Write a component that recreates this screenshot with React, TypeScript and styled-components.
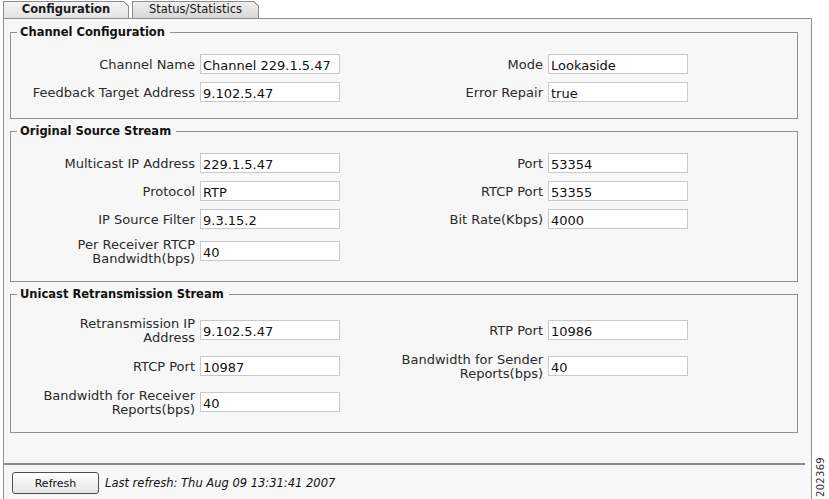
import React from "react";
import styled, { createGlobalStyle } from "styled-components";

const GlobalStyle = createGlobalStyle`
  html, body { margin: 0; padding: 0; background: #ffffff; }
  body { font-family: "DejaVu Sans", Verdana, sans-serif; color: #222; }
  * { box-sizing: border-box; }
`;

const Page = styled.div`
  display: flex;
  width: 829px;
  height: 499px;
  overflow: hidden;
`;

const Main = styled.div`
  width: 812px;
  padding-left: 3px;
  display: flex;
  flex-direction: column;
`;

const TabBar = styled.div`
  display: flex;
  gap: 3px;
  height: 18px;
  padding-top: 1px;
`;

const Tab = styled.div<{ $active?: boolean; $w: number }>`
  width: ${(p) => p.$w}px;
  height: 17px;
  border: 1px solid #8c8c8c;
  border-bottom: none;
  font-size: 11.5px;
  line-height: 15px;
  font-weight: ${(p) => (p.$active ? "bold" : "normal")};
  color: #1a1a1a;
  text-align: center;
  background-origin: border-box;
  background-image:
    linear-gradient(225deg, #ffffff 3.4px, #8c8c8c 3.4px, #8c8c8c 4.6px, transparent 4.6px),
    ${(p) =>
      p.$active
        ? "linear-gradient(#f6f6f6, #e3e3e3)"
        : "linear-gradient(#f0f0f0, #d7d7d7)"};
  clip-path: polygon(0 0, calc(100% - 5px) 0, 100% 5px, 100% 100%, 0 100%);
`;

const Panel = styled.div`
  flex: 1;
  border: 1px solid #8c8c8c;
  border-bottom: none;
  background: #f7f7f7;
  display: flex;
  flex-direction: column;
`;

const Sections = styled.div`
  padding: 6px 13px 0 6px;
  display: flex;
  flex-direction: column;
  gap: 5px;
`;

const Fieldset = styled.fieldset`
  margin: 0;
  padding: 11px 0 12px 0;
  border: 1px solid #8f8f8f;
  min-width: 0;
`;

const Legend = styled.legend`
  margin-left: 6px;
  padding: 0 5px 0 3px;
  font-size: 11.5px;
  line-height: 14px;
  font-weight: bold;
  color: #111;
`;

const Grid = styled.div`
  display: grid;
  grid-template-columns: 189px 140px 208px 140px;
  align-items: center;
`;

const Label = styled.div`
  padding: 5px 5px 3px 0;
  text-align: right;
  font-size: 13px;
  line-height: 14px;
  color: #2a2a2a;
`;

const Cell = styled.div`
  padding: 4px 0;
`;

const Field = styled.div`
  width: 140px;
  height: 20px;
  border: 1px solid #c9c9c9;
  background: #ffffff;
  padding: 1px 2px 0;
  font-size: 13px;
  line-height: 19px;
  color: #111;
  white-space: nowrap;
  overflow: hidden;
`;

const Footer = styled.div`
  margin-top: 30px;
`;

const Separator = styled.div`
  height: 2px;
  margin-right: 6px;
  background: #8a8a8a;
`;

const ActionRow = styled.div`
  display: flex;
  align-items: center;
  gap: 6px;
  padding: 7px 0 0 8px;
`;

const Button = styled.button`
  width: 87px;
  height: 22px;
  border: 1px solid #4e4e4e;
  border-radius: 3px;
  background: linear-gradient(#ffffff, #e4e4e4);
  font-family: "DejaVu Sans", Verdana, sans-serif;
  font-size: 11px;
  color: #111;
  padding: 0;
`;

const Status = styled.span`
  font-size: 11.5px;
  font-style: italic;
  color: #111;
`;

const Side = styled.div`
  width: 17px;
  display: flex;
  flex-direction: column;
  justify-content: flex-end;
  align-items: center;
  padding-bottom: 2px;
`;

const FigureId = styled.span`
  writing-mode: vertical-rl;
  transform: rotate(180deg);
  font-size: 10px;
  color: #333;
  letter-spacing: 0.3px;
`;

type Row = [string[], string, (string[] | null)?, string?];

const Section: React.FC<{ title: string; rows: Row[] }> = ({ title, rows }) => (
  <Fieldset>
    <Legend>{title}</Legend>
    <Grid>
      {rows.map(([l1, v1, l2, v2], i) => (
        <React.Fragment key={i}>
          <Label>
            {l1.map((t, j) => (
              <div key={j}>{t}</div>
            ))}
          </Label>
          <Cell>
            <Field>{v1}</Field>
          </Cell>
          <Label>
            {(l2 || []).map((t, j) => (
              <div key={j}>{t}</div>
            ))}
          </Label>
          <Cell>{l2 ? <Field>{v2}</Field> : null}</Cell>
        </React.Fragment>
      ))}
    </Grid>
  </Fieldset>
);

export default function App() {
  return (
    <>
      <GlobalStyle />
      <Page>
        <Main>
          <TabBar>
            <Tab $active $w={126}>Configuration</Tab>
            <Tab $w={127}>Status/Statistics</Tab>
          </TabBar>
          <Panel>
            <Sections>
              <Section
                title="Channel Configuration"
                rows={[
                  [["Channel Name"], "Channel 229.1.5.47", ["Mode"], "Lookaside"],
                  [["Feedback Target Address"], "9.102.5.47", ["Error Repair"], "true"],
                ]}
              />
              <Section
                title="Original Source Stream"
                rows={[
                  [["Multicast IP Address"], "229.1.5.47", ["Port"], "53354"],
                  [["Protocol"], "RTP", ["RTCP Port"], "53355"],
                  [["IP Source Filter"], "9.3.15.2", ["Bit Rate(Kbps)"], "4000"],
                  [["Per Receiver RTCP", "Bandwidth(bps)"], "40", null],
                ]}
              />
              <Section
                title="Unicast Retransmission Stream"
                rows={[
                  [["Retransmission IP", "Address"], "9.102.5.47", ["RTP Port"], "10986"],
                  [["RTCP Port"], "10987", ["Bandwidth for Sender", "Reports(bps)"], "40"],
                  [["Bandwidth for Receiver", "Reports(bps)"], "40", null],
                ]}
              />
            </Sections>
            <Footer>
              <Separator />
              <ActionRow>
                <Button>Refresh</Button>
                <Status>Last refresh: Thu Aug 09 13:31:41 2007</Status>
              </ActionRow>
            </Footer>
          </Panel>
        </Main>
        <Side>
          <FigureId>202369</FigureId>
        </Side>
      </Page>
    </>
  );
}
